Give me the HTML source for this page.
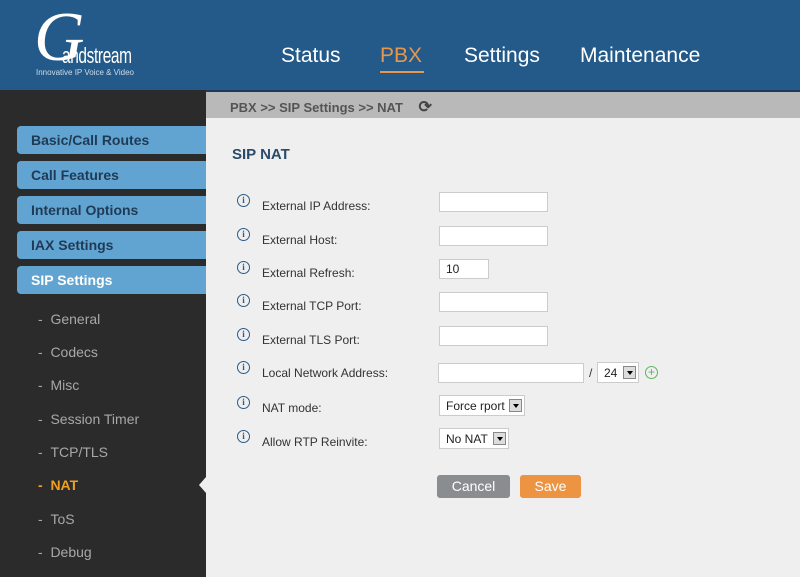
<!DOCTYPE html>
<html><head><style>
*{margin:0;padding:0;box-sizing:border-box}
body{width:800px;height:577px;overflow:hidden;position:relative;background:#efefef;font-family:"Liberation Sans",Arial,sans-serif}
.abs{position:absolute}
#hdr{left:0;top:0;width:800px;height:90px;background:#245a89}
.nav{top:44px;font-size:21px;color:#fff}
#side{left:0;top:90px;width:206px;height:487px;background:#2b2b2b}
#crumb{left:206px;top:92px;width:594px;height:26px;background:#b9b9b9;font-size:13px;font-weight:bold;color:#555;padding:5px 0 0 24px}
.btn{left:17px;width:189px;height:28px;background:#62a4d1;border-radius:4px 0 0 4px;font-size:14px;font-weight:bold;color:#1f3a55;padding:6px 0 0 14px}
.sub{left:38px;font-size:14px;color:#a8a8a8}
.lbl{left:262px;font-size:12px;color:#333}
.ic{left:237px;width:13px;height:13px;border:1px solid #2a5a8a;border-radius:50%;font-size:9px;color:#2a5a8a;text-align:center;line-height:11px;font-family:"Liberation Serif",serif;font-weight:bold}
.in{left:439px;width:109px;height:20px;background:#fff;border:1px solid #ccc;font-size:12px;padding:2px 6px;color:#222}
.sel{height:21px;background:#fff;border:1px solid #ccc;font-size:12px;padding:3px 6px;color:#222}
.dd{position:absolute;right:2px;top:3px;width:13px;height:13px;border:1px solid #888;background:#ddd}
.dd:after{content:"";position:absolute;left:3px;top:4px;border:3px solid transparent;border-top:4px solid #000}
</style></head><body>
<div id="hdr" class="abs">
<div class="abs" style="left:34px;top:6px;font-family:'Liberation Serif',serif;font-style:italic;font-size:70px;color:#fff;line-height:64px">G</div>
<div class="abs" style="left:62px;top:43px;font-size:22px;color:#fff;transform:scaleX(0.7);transform-origin:left;letter-spacing:-0.5px">andstream</div>
<div class="abs" style="left:36px;top:68px;font-size:8px;color:#cfdbe8">Innovative IP Voice &amp; Video</div>
<div class="abs nav" style="left:281px">Status</div>
<div class="abs nav" style="left:380px;color:#e8964a">PBX</div>
<div class="abs" style="left:380px;top:71px;width:44px;height:2px;background:#e8964a"></div>
<div class="abs nav" style="left:464px">Settings</div>
<div class="abs nav" style="left:580px">Maintenance</div>
</div>
<div class="abs" style="left:0;top:90px;width:800px;height:2px;background:#1e3a55"></div>
<div id="side" class="abs"></div>
<div id="crumb" class="abs">PBX &gt;&gt; SIP Settings &gt;&gt; NAT <span style="margin-left:12px;font-size:16px;color:#444">⟳</span></div>
<div class="abs btn" style="top:126px">Basic/Call Routes</div>
<div class="abs btn" style="top:161px">Call Features</div>
<div class="abs btn" style="top:196px">Internal Options</div>
<div class="abs btn" style="top:231px">IAX Settings</div>
<div class="abs btn" style="top:266px;color:#fff">SIP Settings</div>
<div class="abs sub" style="top:311px">-&nbsp;&nbsp;General</div>
<div class="abs sub" style="top:344px">-&nbsp;&nbsp;Codecs</div>
<div class="abs sub" style="top:377px">-&nbsp;&nbsp;Misc</div>
<div class="abs sub" style="top:411px">-&nbsp;&nbsp;Session Timer</div>
<div class="abs sub" style="top:444px">-&nbsp;&nbsp;TCP/TLS</div>
<div class="abs sub" style="top:477px;color:#f0a020;font-weight:bold">-&nbsp;&nbsp;NAT</div>
<div class="abs sub" style="top:511px">-&nbsp;&nbsp;ToS</div>
<div class="abs sub" style="top:544px">-&nbsp;&nbsp;Debug</div>
<div class="abs" style="left:199px;top:477px;border:8px solid transparent;border-right:7px solid #efefef;border-left:0"></div>
<div class="abs" style="left:232px;top:146px;font-size:15px;font-weight:bold;color:#2a4a6a">SIP NAT</div>

<div class="abs ic" style="top:194px">i</div><div class="abs lbl" style="top:199px">External IP Address:</div><div class="abs in" style="top:192px"></div>
<div class="abs ic" style="top:228px">i</div><div class="abs lbl" style="top:233px">External Host:</div><div class="abs in" style="top:226px"></div>
<div class="abs ic" style="top:261px">i</div><div class="abs lbl" style="top:266px">External Refresh:</div><div class="abs in" style="top:259px;width:50px">10</div>
<div class="abs ic" style="top:294px">i</div><div class="abs lbl" style="top:299px">External TCP Port:</div><div class="abs in" style="top:292px"></div>
<div class="abs ic" style="top:328px">i</div><div class="abs lbl" style="top:333px">External TLS Port:</div><div class="abs in" style="top:326px"></div>
<div class="abs ic" style="top:361px">i</div><div class="abs lbl" style="top:366px">Local Network Address:</div><div class="abs in" style="top:363px;left:438px;width:146px"></div>
<div class="abs" style="left:589px;top:366px;font-size:12px;color:#333">/</div>
<div class="abs sel" style="left:597px;top:362px;width:42px">24<span class="dd"></span></div>
<div class="abs" style="left:645px;top:366px;width:13px;height:13px;border:1px solid #5bb55b;border-radius:50%;color:#5bb55b;font-size:12px;line-height:10px;text-align:center">+</div>
<div class="abs ic" style="top:396px">i</div><div class="abs lbl" style="top:401px">NAT mode:</div>
<div class="abs sel" style="left:439px;top:395px;width:86px">Force rport<span class="dd"></span></div>
<div class="abs ic" style="top:430px">i</div><div class="abs lbl" style="top:435px">Allow RTP Reinvite:</div>
<div class="abs sel" style="left:439px;top:428px;width:70px">No NAT<span class="dd"></span></div>
<div class="abs" style="left:437px;top:475px;width:73px;height:23px;background:#8a8d8f;border-radius:3px;color:#fff;font-size:14px;text-align:center;line-height:23px">Cancel</div>
<div class="abs" style="left:520px;top:475px;width:61px;height:23px;background:#ec9441;border-radius:3px;color:#fff;font-size:14px;text-align:center;line-height:23px">Save</div>
</body></html>
